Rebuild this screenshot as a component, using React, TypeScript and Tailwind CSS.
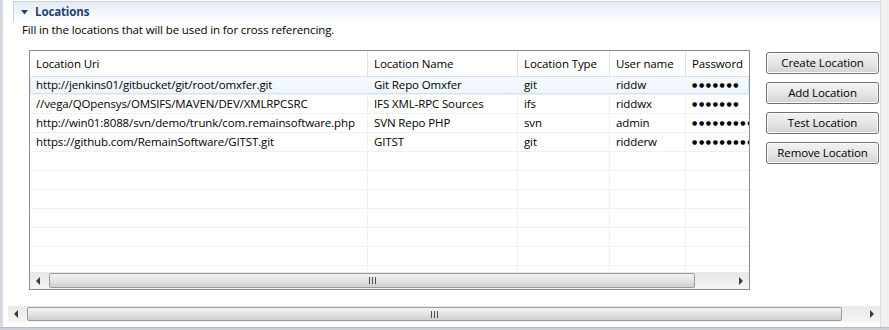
import * as React from "react";

const cols = [
  { title: "Location Uri", w: "w-[338px]" },
  { title: "Location Name", w: "w-[150px]" },
  { title: "Location Type", w: "w-[92px]" },
  { title: "User name", w: "w-[76px]" },
  { title: "Password", w: "w-[100px]" },
];

const rows = [
  ["http://jenkins01/gitbucket/git/root/omxfer.git", "Git Repo Omxfer", "git", "riddw", 7],
  ["//vega/QOpensys/OMSIFS/MAVEN/DEV/XMLRPCSRC", "IFS XML-RPC Sources", "ifs", "riddwx", 7],
  ["http://win01:8088/svn/demo/trunk/com.remainsoftware.php", "SVN Repo PHP", "svn", "admin", 9],
  ["https://github.com/RemainSoftware/GITST.git", "GITST", "git", "ridderw", 9],
] as const;

const buttons = ["Create Location", "Add Location", "Test Location", "Remove Location"];

const Arrow = ({ dir }: { dir: "left" | "right" }) => (
  <div className="w-[17px] h-full flex items-center justify-center">
    <svg width="5" height="8" viewBox="0 0 5 8">
      {dir === "left" ? <path d="M4 0 L0 4 L4 8 Z" fill="#3a3a3a" /> : <path d="M1 0 L5 4 L1 8 Z" fill="#3a3a3a" />}
    </svg>
  </div>
);

const Grip = () => (
  <svg width="7" height="7" viewBox="0 0 7 7">
    <rect x="0" y="0" width="1" height="7" fill="#4a4a4a" />
    <rect x="3" y="0" width="1" height="7" fill="#4a4a4a" />
    <rect x="6" y="0" width="1" height="7" fill="#4a4a4a" />
  </svg>
);

// horizontal scrollbar, thumb width passed as a full class name
const HScroll = ({ thumb, h }: { thumb: string; h: string }) => (
  <div className={`${h} flex items-stretch bg-linear-to-b from-[#e8e8e8] to-[#f4f4f4]`}>
    <Arrow dir="left" />
    <div className="flex-1 flex items-stretch py-px">
      <div className={`${thumb} ml-[2px] rounded-[2px] border border-[#9a9a9a] bg-linear-to-b from-[#f4f4f4] via-[#e4e4e4] to-[#cfcfcf] flex items-center justify-center`}>
        <Grip />
      </div>
    </div>
    <Arrow dir="right" />
  </div>
);

const Dots = ({ n }: { n: number }) => (
  <span className="flex items-center font-['DejaVu_Sans',sans-serif] text-[6px] leading-none tracking-normal">
    {Array.from({ length: n }).map((_, k) => (
      <span key={k} className="inline-block w-[6.9px] shrink-0">●</span>
    ))}
  </span>
);

export default function App() {
  return (
    <div className="w-[889px] h-[330px] bg-white flex flex-col overflow-hidden font-['Open_Sans',sans-serif] text-[11.5px] tracking-[-0.12px] text-black">
      <div className="flex-1 flex">
        <div className="w-[3px] bg-[#d2d8e0]" />
        <div className="w-[877px] flex flex-col">
          {/* section title */}
          <div className="mt-[1px] ml-[10px] h-[21px] border-t border-l border-[#c9d3de] bg-linear-to-b from-[#e4ebf3] to-white flex items-center">
            <svg width="8" height="5" viewBox="0 0 8 5" className="ml-[7px] mt-[1px]">
              <path d="M0 0 L7 0 L3.5 4.5 Z" fill="#27426d" />
            </svg>
            <span className="ml-[6px] font-bold text-[#1e4374] leading-[16px]">Locations</span>
          </div>
          <div className="pl-[19px] h-[16px] leading-[16px]">Fill in the locations that will be used in for cross referencing.</div>

          <div className="mt-[12px] ml-[26px] flex items-start">
            {/* table */}
            <div className="w-[721px] h-[240px] border border-[#8a8e94] flex flex-col overflow-hidden">
              <div className="h-[25px] flex shrink-0">
                {cols.map((c) => (
                  <div key={c.title} className={`${c.w} shrink-0 h-full border-r border-[#e3e3e3] pl-[6px] flex items-center whitespace-nowrap`}>
                    {c.title}
                  </div>
                ))}
              </div>
              <div className="h-[196px] overflow-hidden flex flex-col shrink-0">
                {Array.from({ length: 11 }).map((_, i) => {
                  const r = rows[i];
                  const sel = i === 0;
                  return (
                    <div
                      key={i}
                      className={`h-[19px] shrink-0 flex border-b border-[#f0f0f0] ${sel ? "rounded-[2px] bg-linear-to-b from-[#f7fbff] to-[#eef5fd] shadow-[inset_0_0_0_1px_#d3e3f5]" : ""}`}
                    >
                      {cols.map((c, j) => (
                        <div
                          key={j}
                          className={`${c.w} shrink-0 h-full ${sel ? "border-r border-transparent" : "border-r border-[#edf0f4]"} pl-[6px] flex items-center whitespace-nowrap overflow-hidden leading-[18px]`}
                        >
                          {r && j < 4 ? r[j] : null}
                          {r && j === 4 ? <Dots n={r[4] as number} /> : null}
                        </div>
                      ))}
                    </div>
                  );
                })}
              </div>
              <HScroll thumb="w-[646px]" h="h-[17px]" />
            </div>

            {/* buttons */}
            <div className="ml-[16px] mt-[2px] flex flex-col gap-[8px]">
              {buttons.map((b) => (
                <button
                  key={b}
                  className="w-[113px] h-[22px] rounded-[3px] border border-[#707070] bg-linear-to-b from-[#f2f2f2] via-[#e6e6e6] to-[#d2d2d2] shadow-[inset_0_0_0_1px_#fcfcfc] flex items-center justify-center leading-none"
                >
                  {b}
                </button>
              ))}
            </div>
          </div>

          <div className="mt-[16px] ml-[5px]">
            <HScroll thumb="w-[815px]" h="h-[16px]" />
          </div>
        </div>
        <div className="w-[9px] bg-[#f0f0f0] border-l border-[#dcdcdc]" />
      </div>
      <div className="h-[3px] bg-[#c7cfd9] border-t border-[#b4bdc9]" />
    </div>
  );
}
